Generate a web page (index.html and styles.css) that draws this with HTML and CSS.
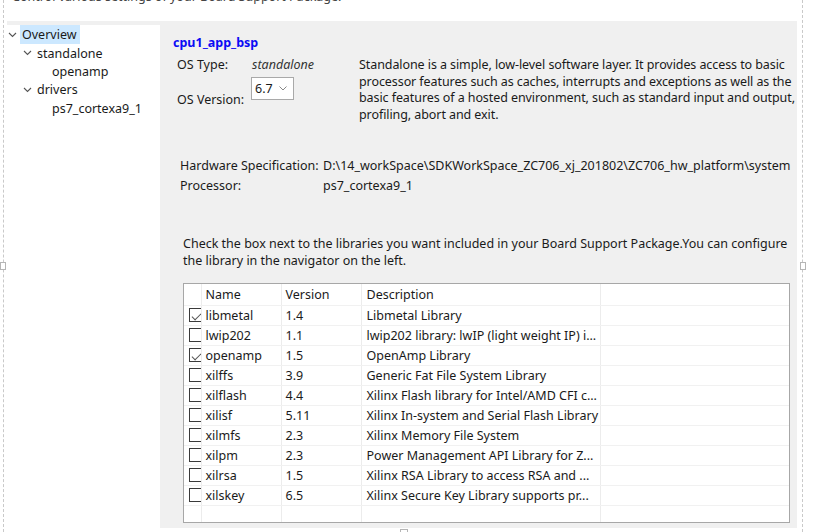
FILE: index.html
```html
<!DOCTYPE html>
<html>
<head>
<meta charset="utf-8">
<link rel="stylesheet" href="styles.css">
</head>
<body>
<div class="design">
  <div class="caption"><span>Control various settings of your Board Support Package.</span></div>
  <div class="frame">
    <div class="frame-body">
      <div class="tree">
        <div class="node sel"><svg class="chev" width="9" height="6" viewBox="0 0 9 6"><polyline points="1,1 4.5,4.5 8,1" /></svg><span class="label">Overview</span></div>
        <div class="node l1"><svg class="chev" width="9" height="6" viewBox="0 0 9 6"><polyline points="1,1 4.5,4.5 8,1" /></svg><span>standalone</span></div>
        <div class="node l2"><span>openamp</span></div>
        <div class="node l1"><svg class="chev" width="9" height="6" viewBox="0 0 9 6"><polyline points="1,1 4.5,4.5 8,1" /></svg><span>drivers</span></div>
        <div class="node l2"><span>ps7_cortexa9_1</span></div>
      </div>
      <div class="main">
        <div class="title">cpu1_app_bsp</div>
        <div class="os">
          <div class="os-left">
            <div class="os-row"><span class="os-label">OS Type:</span><span class="os-type">standalone</span></div>
            <div class="os-row two"><span class="os-label ver">OS Version:</span>
              <div class="select"><span>6.7</span><svg width="8" height="5" viewBox="0 0 8 5"><polyline points="0.5,0.5 4,4 7.5,0.5" /></svg></div>
            </div>
          </div>
          <div class="os-desc">Standalone is a simple, low-level software layer. It provides access to basic<br>processor features such as caches, interrupts and exceptions as well as the<br>basic features of a hosted environment, such as standard input and output,<br>profiling, abort and exit.</div>
        </div>
        <div class="hw">
          <span>Hardware Specification:</span><span>D:\14_workSpace\SDKWorkSpace_ZC706_xj_201802\ZC706_hw_platform\system</span>
          <span>Processor:</span><span>ps7_cortexa9_1</span>
        </div>
        <div class="check-text">Check the box next to the libraries you want included in your Board Support Package.You can configure<br>the library in the navigator on the left.</div>
        <div class="table-wrap">
          <table class="libs">
            <colgroup><col class="c0"><col class="c1"><col class="c2"><col class="c3"><col class="c4"></colgroup>
            <thead><tr><th></th><th>Name</th><th>Version</th><th class="desc">Description</th><th></th></tr></thead>
            <tbody>
              <tr><td><span class="cb on"></span></td><td>libmetal</td><td>1.4</td><td class="desc">Libmetal Library</td><td></td></tr>
              <tr><td><span class="cb"></span></td><td>lwip202</td><td>1.1</td><td class="desc">lwip202 library: lwIP (light weight IP) i...</td><td></td></tr>
              <tr><td><span class="cb on"></span></td><td>openamp</td><td>1.5</td><td class="desc">OpenAmp Library</td><td></td></tr>
              <tr><td><span class="cb"></span></td><td>xilffs</td><td>3.9</td><td class="desc">Generic Fat File System Library</td><td></td></tr>
              <tr><td><span class="cb"></span></td><td>xilflash</td><td>4.4</td><td class="desc">Xilinx Flash library for Intel/AMD CFI c...</td><td></td></tr>
              <tr><td><span class="cb"></span></td><td>xilisf</td><td>5.11</td><td class="desc">Xilinx In-system and Serial Flash Library</td><td></td></tr>
              <tr><td><span class="cb"></span></td><td>xilmfs</td><td>2.3</td><td class="desc">Xilinx Memory File System</td><td></td></tr>
              <tr><td><span class="cb"></span></td><td>xilpm</td><td>2.3</td><td class="desc">Power Management API Library for Z...</td><td></td></tr>
              <tr><td><span class="cb"></span></td><td>xilrsa</td><td>1.5</td><td class="desc">Xilinx RSA Library to access RSA and ...</td><td></td></tr>
              <tr><td><span class="cb"></span></td><td>xilskey</td><td>6.5</td><td class="desc">Xilinx Secure Key Library supports pr...</td><td></td></tr>
              <tr class="empty"><td></td><td></td><td></td><td></td><td></td></tr>
            </tbody>
          </table>
        </div>
      </div>
    </div>
  </div>
  <span class="handle left"></span>
  <span class="handle right"></span>
  <span class="handle bottom"></span>
</div>
</body>
</html>
```

FILE: styles.css
```css
* { box-sizing: border-box; }
html, body { margin: 0; padding: 0; background: #fff; }
body {
  font-family: "Noto Sans", "Open Sans", "Liberation Sans", sans-serif;
  font-size: 12.5px;
  color: #1a1a1a;
  width: 822px;
  height: 532px;
  overflow: hidden;
}
.design {
  position: relative;
  margin-left: 3px;
  width: 800px;
  height: 532px;
  border-left: 1px dashed #c9c9c9;
  border-right: 1px dashed #c9c9c9;
}
.caption {
  height: 21px;
  overflow: hidden;
  padding-left: 8px;
  color: #444;
}
.caption span { display: block; line-height: 17px; margin-top: -12px; }
.frame {
  margin-left: 3px;
  width: 790px;
  height: 511px;
  background: #f0f0f0;
  padding-top: 4px;
}
.frame-body {
  display: flex;
  height: 507px;
  background: #fff;
}
.tree {
  flex: none;
  width: 153px;
  background: #fff;
}
.node {
  display: flex;
  align-items: center;
  height: 18.3px;
  white-space: nowrap;
}
.node.sel { height: 19px; padding-left: 1px; }
.chev { fill: none; stroke: #555; stroke-width: 1.1; flex: none; }
.node.sel .chev { margin-right: 3px; }
.node.sel .label { background: #cce8ff; padding: 0 3px 0 2px; line-height: 19px; }
.node.l1 { padding-left: 16px; }
.node.l1 .chev { margin-right: 5px; }
.node.l2 { padding-left: 45px; }
.main {
  flex: 1;
  min-width: 0;
  background: #f0f0f0;
  margin-bottom: 4px;
  overflow: hidden;
}
.title {
  margin: 9px 0 0 13px;
  line-height: 17px;
  font-weight: bold;
  color: #0b0bf5;
}
.os {
  display: flex;
  margin-top: 4px;
  padding-left: 17px;
}
.os-left { width: 182px; flex: none; padding-top: 1px; }
.os-row { display: flex; line-height: 17px; }
.os-label { width: 75px; flex: none; }
.os-type { font-style: italic; color: #333; }
.os-row.two { margin-top: 4px; align-items: flex-start; }
.os-label.ver { margin-top: 14px; }
.select {
  width: 43px;
  height: 23px;
  background: #fff;
  border: 1px solid #a9a9a9;
  display: flex;
  align-items: center;
  justify-content: space-between;
  padding: 0 6px 0 3px;
  margin-left: -1px;
}
.select svg { fill: none; stroke: #888; stroke-width: 1; }
.os-desc {
  padding-top: 2px;
  line-height: 16.7px;
  letter-spacing: -0.08px;
  white-space: nowrap;
}
.hw {
  display: grid;
  grid-template-columns: 143px auto;
  line-height: 20px;
  margin-top: 32px;
  padding-left: 20px;
  white-space: nowrap;
}
.check-text {
  margin-top: 39px;
  padding-left: 23px;
  line-height: 17px;
  white-space: nowrap;
}
.table-wrap {
  margin: 14px 0 0 23px;
  width: 607px;
  height: 240px;
  background: #fff;
  border: 1px solid #a7a7a7;
  overflow: hidden;
}
.libs {
  border-collapse: collapse;
  table-layout: fixed;
  width: 606px;
}
.c0 { width: 17px; }
.c1 { width: 80px; }
.c2 { width: 80px; }
.c3 { width: 239px; }
.c4 { width: 190px; }
.libs th, .libs td {
  text-align: left;
  font-weight: normal;
  padding: 1px 0 0 4px;
  white-space: nowrap;
  overflow: hidden;
  border-right: 1px solid #ececec;
  border-bottom: 1px solid #f1f1f1;
}
.libs th { height: 21px; line-height: 20px; }
.libs td { height: 20px; line-height: 18px; }
.libs .desc { padding-left: 5px; }
.libs th:first-child, .libs td:first-child { padding: 0 0 0 5px; }
.libs th:last-child, .libs td:last-child { border-right: none; }
.libs tr.empty td { height: 18px; border-bottom: none; }
.cb {
  display: block;
  width: 13px;
  height: 14px;
  border: 1px solid #3a3a3a;
  background: #fff;
  position: relative;
}
.cb.on::after {
  content: "";
  position: absolute;
  left: 2px;
  top: 2px;
  width: 8px;
  height: 4px;
  border-left: 1px solid #555;
  border-bottom: 1px solid #555;
  transform: translate(0, 2px) rotate(-45deg);
}
.handle {
  position: absolute;
  width: 6px;
  height: 8px;
  border: 1px solid #b5b5b5;
  background: #fff;
}
.handle.left { left: -4px; top: 262px; }
.handle.right { right: -4px; top: 262px; }
.handle.bottom { left: 396px; top: 529px; width: 8px; height: 6px; }
```
